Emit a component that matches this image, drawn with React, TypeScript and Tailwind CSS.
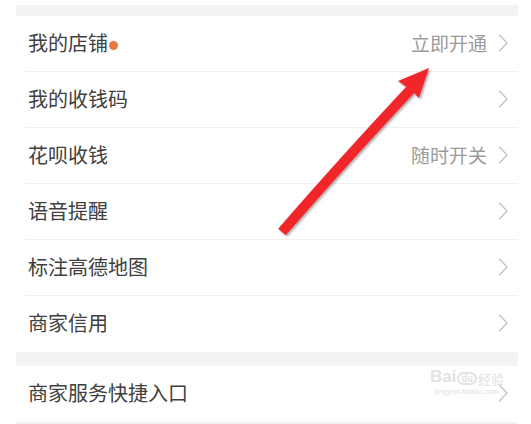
import { FC } from "react"

type Row = { title: string; extra?: string; dot?: boolean }

const rows: Row[] = [
  { title: "我的店铺", extra: "立即开通", dot: true },
  { title: "我的收钱码" },
  { title: "花呗收钱", extra: "随时开关" },
  { title: "语音提醒" },
  { title: "标注高德地图" },
  { title: "商家信用" },
]

const Chevron: FC = () => (
  <svg width="12" height="20" viewBox="0 0 12 20" className="ml-[10px]">
    <path d="M2 1.5 L10 10 L2 18.5" fill="none" stroke="#c4c4c4" strokeWidth="1.4" />
  </svg>
)

const ListRow: FC<{ row: Row; last?: boolean }> = ({ row, last }) => (
  <div className="h-[56px] pl-[9px] bg-white">
    <div className={`h-full flex items-center pl-[3px] pr-[9px] pb-[2px] ${last ? "" : "border-b border-[#efefef]"}`}>
      <span className="text-[20px] text-[#404040] leading-none">{row.title}</span>
      {row.dot && <span className="ml-[1px] mt-[6px] w-[9px] h-[9px] rounded-full bg-[#e9773f]" />}
      <div className="flex-1" />
      {row.extra && <span className="text-[19px] text-[#9b9b9b] leading-none">{row.extra}</span>}
      <Chevron />
    </div>
  </div>
)

const App: FC = () => {
  return (
    <div
      className="relative w-[531px] h-[424px] bg-white overflow-hidden"
      style={{ fontFamily: '"Noto Sans CJK SC", "Noto Sans", sans-serif' }}
    >
      <div className="ml-[16px] w-[502px] pt-[5px]">
        <div className="h-[11px] bg-[#f3f3f5]" />
        {rows.map((row, i) => (
          <ListRow key={row.title} row={row} last={i === rows.length - 1} />
        ))}
        <div className="h-[14px] bg-[#f3f3f5]" />
        <ListRow row={{ title: "商家服务快捷入口" }} last />
        <div className="h-[4px] bg-[#f3f3f5]" />
      </div>

      {/* watermark */}
      <div className="absolute left-[425px] top-[368px] w-[84px] flex flex-col items-center text-[#e2e2e2]">
        <div className="flex items-end gap-[1px] leading-none">
          <span className="text-[17px] font-bold" style={{ fontFamily: '"Liberation Sans", sans-serif' }}>Bai</span>
          <span className="text-[9px] font-bold border-2 border-[#e2e2e2] rounded-full px-[2px]">du</span>
          <span className="text-[13px]">经验</span>
        </div>
        <span className="text-[8px] leading-tight mt-[2px]" style={{ fontFamily: '"Liberation Sans", sans-serif' }}>jingyan.baidu.com</span>
      </div>

      {/* red arrow */}
      <svg className="absolute left-0 top-0" width="531" height="424" viewBox="0 0 531 424">
        <defs>
          <filter id="sh" x="-20%" y="-20%" width="140%" height="140%">
            <feDropShadow dx="1.5" dy="1.5" stdDeviation="1.2" floodColor="#000" floodOpacity="0.35" />
          </filter>
        </defs>
        <g filter="url(#sh)">
          <path d="M282 232 Q 340 165 411 89" stroke="#f1262a" strokeWidth="10" strokeLinecap="butt" fill="none" />
          <path d="M429 68 L398 81 L405 86 L412 90 L416 95 L419 98 Z" fill="#f1262a" />
        </g>
      </svg>
    </div>
  )
}

export default App
